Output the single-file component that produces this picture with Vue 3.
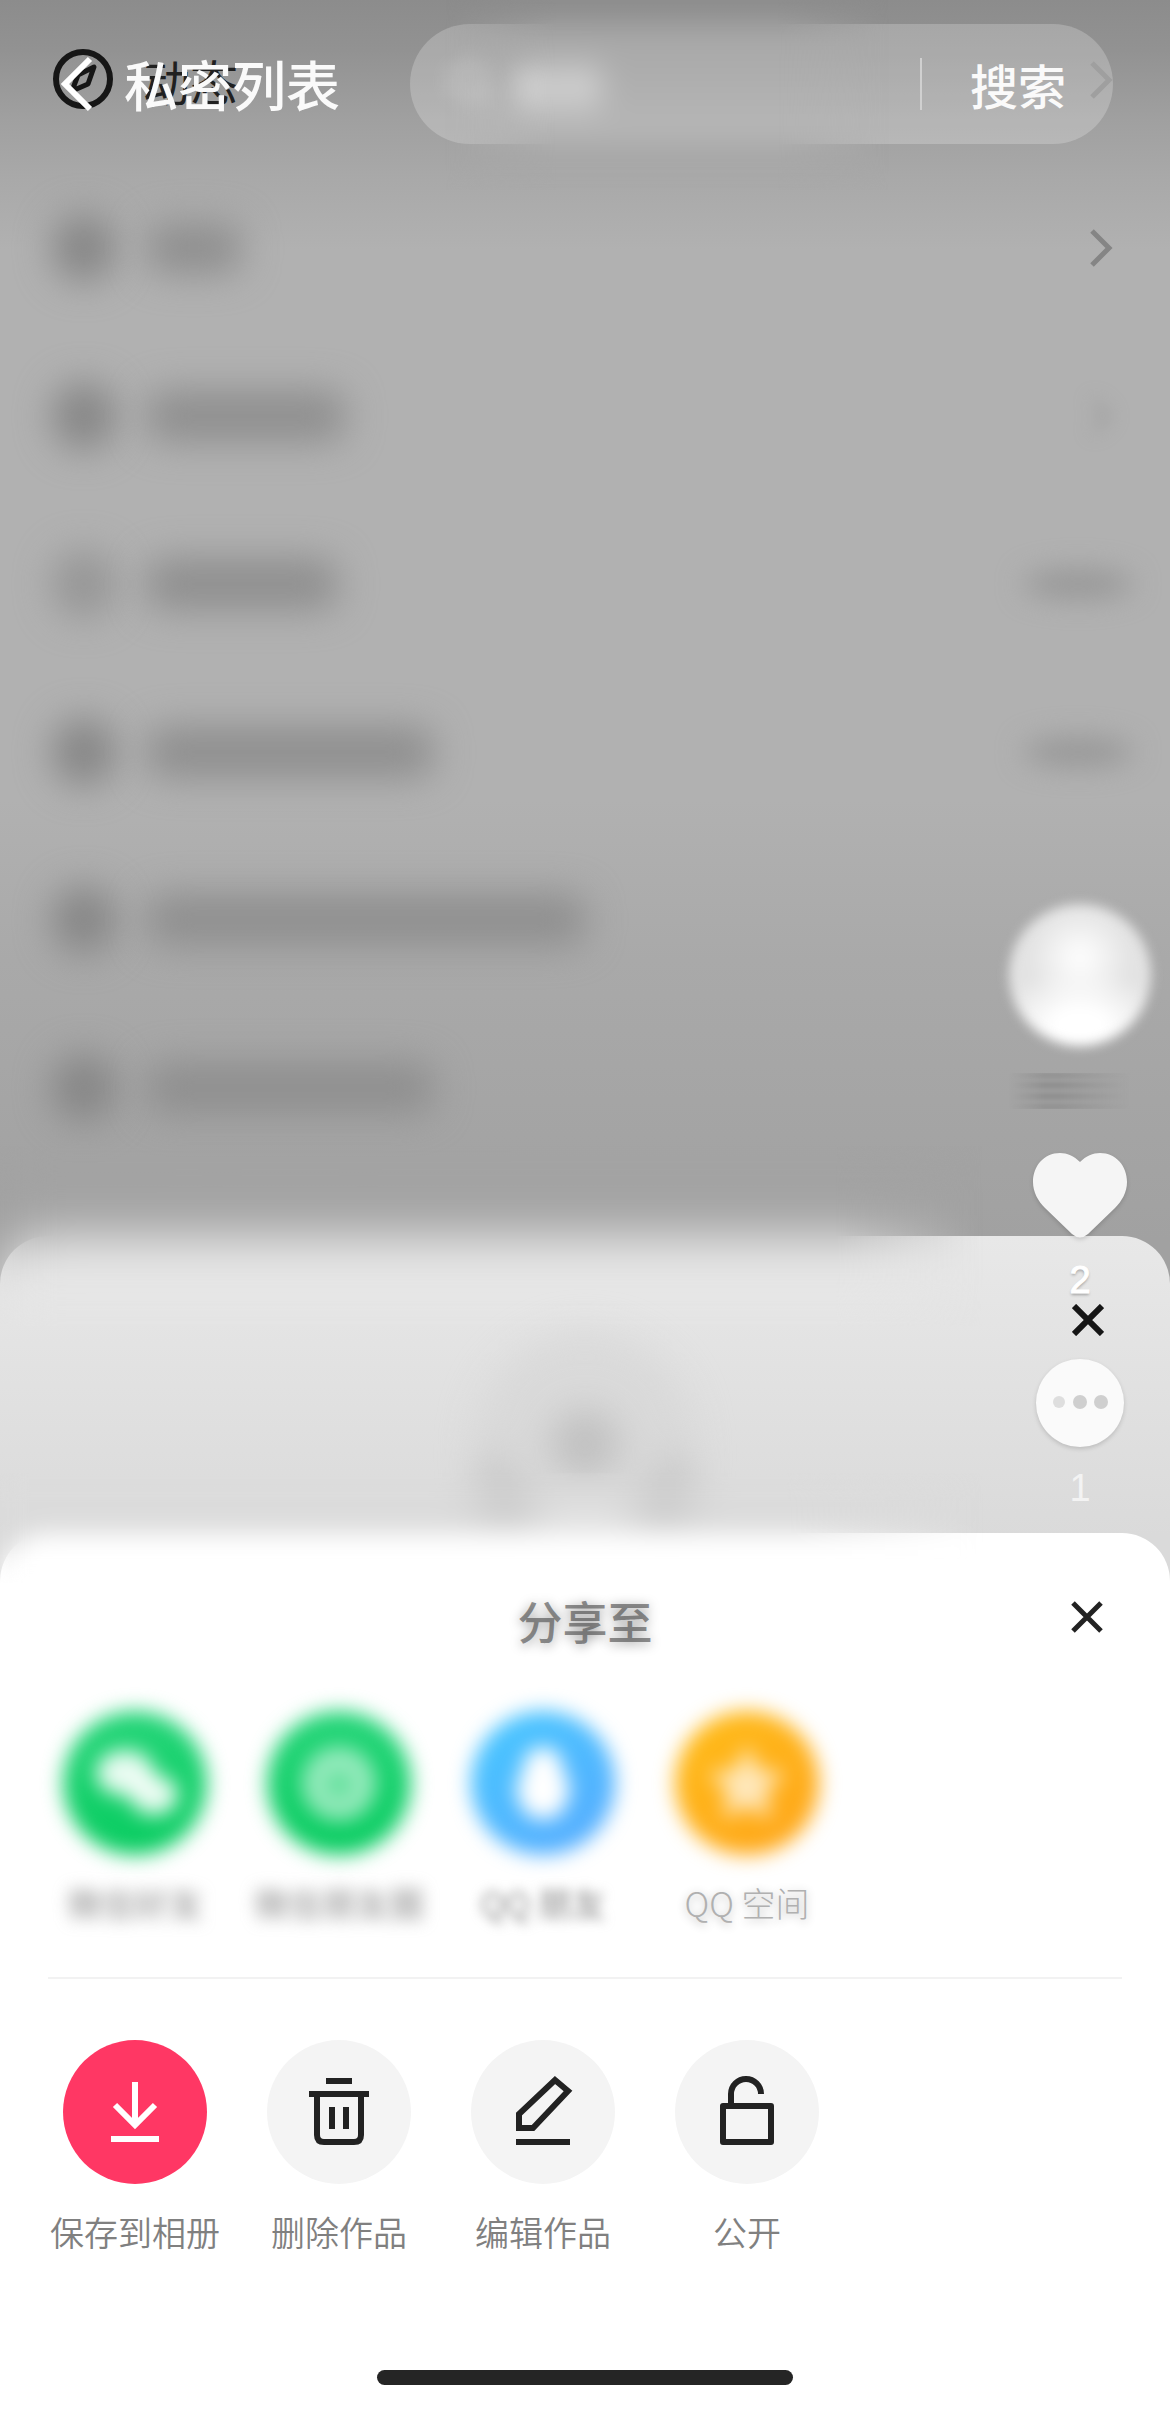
<script setup>
import { ref } from 'vue';

const keyword = ref('');

// width: length of the blurred label, tail: length of the blurred value on the right
const rows = [
    { id: 1, label: '动态', arrow: true },
    { id: 2, width: 96, arrow: true },
    { id: 3, width: 200, arrow: true, faded: true },
    { id: 4, width: 192, tail: 110, light: true },
    { id: 5, width: 288, tail: 110 },
    { id: 6, width: 440 },
    { id: 7, width: 288 }
];

const targets = [
    { id: 'wechat', label: '微信好友' },
    { id: 'moments', label: '微信朋友圈' },
    { id: 'qq', label: 'QQ 朋友' },
    { id: 'qzone', label: 'QQ 空间' }
];

const actions = [
    { id: 'save', label: '保存到相册' },
    { id: 'delete', label: '删除作品' },
    { id: 'edit', label: '编辑作品' },
    { id: 'public', label: '公开' }
];
</script>

<template>
    <div class="screen">
        <ul class="settings">
            <li v-for="row in rows" :key="row.id" class="row">
                <template v-if="row.label">
                    <svg class="row-icon" viewBox="0 0 62 62" fill="none" stroke="#161616">
                        <circle cx="31" cy="30" r="27" stroke-width="6" />
                        <path d="M42 18L36 35L20 42L26 26Z" stroke-width="5" stroke-linejoin="round" />
                    </svg>
                    <span class="row-label">{{ row.label }}</span>
                </template>
                <template v-else>
                    <span class="row-dot" :class="{ light: row.light }" />
                    <span class="row-smear" :style="{ width: row.width + 'px' }" />
                </template>
                <span class="spacer" />
                <svg v-if="row.arrow" class="row-arrow" :class="{ faded: row.faded }" viewBox="0 0 24 40">
                    <path d="M3 3L20 20L3 37" fill="none" stroke="#858585" stroke-width="5" />
                </svg>
                <span v-if="row.tail" class="row-tail" :style="{ width: row.tail + 'px' }" />
            </li>
        </ul>

        <header class="header">
            <button class="icon-button back" type="button" aria-label="返回">
                <svg width="34" height="56" viewBox="0 0 34 56">
                    <path d="M30 3L5 28L30 53" fill="none" stroke="#fff" stroke-width="6" />
                </svg>
            </button>
            <h1 class="title">私密列表</h1>
            <form class="search" @submit.prevent>
                <svg class="search-icon" viewBox="0 0 48 48" fill="none" stroke="#fff" stroke-width="5">
                    <circle cx="21" cy="21" r="16" />
                    <path d="M33 33L44 44" />
                </svg>
                <input v-model="keyword" class="search-input" type="text" placeholder="搜索" aria-label="搜索" />
                <span class="search-line" />
                <button class="search-button" type="submit">搜索</button>
            </form>
            <div class="haze haze-search" />
        </header>

        <section class="panel">
            <div class="haze haze-panel" />
            <svg class="ghost" viewBox="0 0 320 260">
                <circle cx="160" cy="130" r="110" fill="#d4d4d4" fill-opacity="0.55" />
                <path d="M66 150Q72 186 92 214M254 150Q248 186 228 214" fill="none" stroke="#c6c6c6" stroke-width="34" />
                <circle cx="160" cy="134" r="34" fill="#c0c0c0" />
                <path d="M120 220Q160 170 200 220Z" fill="#e4e4e4" stroke="#e4e4e4" stroke-width="24" />
            </svg>
            <button class="icon-button close" type="button" aria-label="关闭">
                <svg width="32" height="32" viewBox="0 0 32 32">
                    <path d="M2 2L30 30M30 2L2 30" stroke="#161616" stroke-width="6" />
                </svg>
            </button>
        </section>

        <aside class="rail">
            <div class="avatar" />
            <div class="name-smear" />
            <button class="icon-button like" type="button" aria-label="点赞">
                <svg width="94" height="86" viewBox="0 0 94 86">
                    <path
                        d="M47 9C53 3 60 0 67 0C83 0 94 13 94 29C94 39 89 48 82 55L55 81Q47 88 39 81L12 55C5 48 0 39 0 29C0 13 11 0 27 0C34 0 41 3 47 9Z"
                        fill="#f5f5f5"
                    />
                </svg>
            </button>
            <span class="count">2</span>
            <button class="icon-button comment" type="button" aria-label="评论">
                <svg width="88" height="88" viewBox="0 0 88 88">
                    <circle cx="44" cy="44" r="44" fill="#fafafa" />
                    <circle cx="23" cy="43" r="6" fill="#dedede" />
                    <circle cx="44" cy="43" r="7" fill="#cfcfcf" />
                    <circle cx="65" cy="43" r="7" fill="#cfcfcf" />
                </svg>
            </button>
            <span class="count faint">1</span>
        </aside>

        <section class="sheet">
            <div class="haze haze-sheet" />
            <div class="sheet-header">
                <h2 class="sheet-title">分享至</h2>
                <button class="icon-button sheet-close" type="button" aria-label="关闭">
                    <svg width="32" height="32" viewBox="0 0 32 32">
                        <path d="M2 2L30 30M30 2L2 30" stroke="#222" stroke-width="5" />
                    </svg>
                </button>
            </div>

            <div class="options">
                <button v-for="item in targets" :key="item.id" class="option" type="button">
                    <span class="circle soft" :class="item.id">
                        <svg viewBox="0 0 144 144">
                            <g v-if="item.id === 'wechat'" fill="#fff" fill-opacity="0.9">
                                <ellipse cx="62" cy="62" rx="29" ry="23" />
                                <ellipse cx="91" cy="84" rx="24" ry="20" />
                            </g>
                            <g v-else-if="item.id === 'moments'" fill="none" stroke="#fff" stroke-opacity="0.55">
                                <circle cx="72" cy="73" r="24" stroke-width="26" />
                                <circle cx="72" cy="73" r="5" stroke-width="5" />
                            </g>
                            <path
                                v-else-if="item.id === 'qq'"
                                d="M72 36C86 36 92 48 92 60C98 70 102 82 96 88C92 104 84 108 72 108C60 108 52 104 48 88C42 82 46 70 52 60C52 48 58 36 72 36Z"
                                fill="#fff"
                            />
                            <path
                                v-else
                                d="M72 34L84 59L111 62L91 81L96 108L72 95L48 108L53 81L33 62L60 59Z"
                                fill="#fff"
                                fill-opacity="0.7"
                            />
                        </svg>
                    </span>
                    <span class="option-label" :class="'label-' + item.id">{{ item.label }}</span>
                </button>
            </div>

            <hr class="divider" />

            <div class="options">
                <button v-for="item in actions" :key="item.id" class="option" type="button">
                    <span class="circle" :class="item.id">
                        <svg viewBox="0 0 144 144" fill="none" stroke="currentColor" stroke-width="6">
                            <path v-if="item.id === 'save'" d="M72 42V84M52 65L72 85L92 65M48 99H96" />
                            <path
                                v-else-if="item.id === 'delete'"
                                d="M59 41H85M42 54H102M50 54V95Q50 102 57 102H87Q94 102 94 95V54M65 67V89M79 67V89"
                            />
                            <path v-else-if="item.id === 'edit'" d="M84 40L97 51L62 88H48V74ZM45 102H99" />
                            <g v-else>
                                <rect x="48" y="66" width="48" height="36" stroke-linejoin="round" />
                                <path d="M56 66V54A15 15 0 0 1 86 54" />
                            </g>
                        </svg>
                    </span>
                    <span class="option-label">{{ item.label }}</span>
                </button>
            </div>

            <div class="home-bar" />
        </section>
    </div>
</template>

<style>
body {
    margin: 0;
    background: #fff;
}
</style>

<style scoped>
.screen {
    position: relative;
    overflow: hidden;
    font-family: "Noto Sans CJK SC", sans-serif;
    background: linear-gradient(
        #8c8c8c 0,
        #929292 50px,
        #a0a0a0 120px,
        #a9a9a9 180px,
        #b1b1b1 250px,
        #b1b1b1 800px,
        #a9a9a9 960px,
        #a1a1a1 1240px
    );
}

button {
    margin: 0;
    padding: 0;
    border: 0;
    background: none;
    font-family: inherit;
    cursor: pointer;
}

.icon-button {
    display: flex;
    flex: none;
}

/* Settings list behind the overlay */
.settings {
    display: flex;
    flex-direction: column;
    gap: 108px;
    margin: 0;
    padding: 50px 57px 118px 52px;
    list-style: none;
}

.row {
    display: flex;
    align-items: center;
    height: 60px;
}

.row-icon {
    width: 62px;
    height: 62px;
    margin-right: 28px;
}

.row-label {
    font-size: 48px;
    line-height: 60px;
    color: #202020;
}

.row-dot {
    width: 64px;
    height: 68px;
    margin-right: 30px;
    border-radius: 50%;
    background: #868686;
    filter: blur(18px);
}

.row-dot.light {
    background: #969696;
}

.row-smear {
    height: 52px;
    border-radius: 20px;
    background: #8f8f8f;
    filter: blur(18px);
}

.spacer {
    flex: 1;
}

.row-arrow {
    width: 24px;
    height: 40px;
}

.row-arrow.faded {
    opacity: 0.6;
    filter: blur(10px);
}

.row-tail {
    height: 28px;
    margin-right: -20px;
    border-radius: 50%;
    background: #969696;
    filter: blur(14px);
}

/* Header */
.header {
    position: absolute;
    top: 0;
    left: 0;
    right: 0;
    display: flex;
    align-items: center;
    padding: 24px 57px 0 60px;
}

.back {
    width: 34px;
    margin-right: 30px;
}

.title {
    margin: 0 70px 0 0;
    font-size: 54px;
    line-height: 72px;
    font-weight: 500;
    color: #fafafa;
    white-space: nowrap;
}

.search {
    display: flex;
    flex: 1;
    align-items: center;
    min-width: 0;
    height: 120px;
    padding: 0 47px 0 38px;
    box-sizing: border-box;
    border-radius: 60px;
    background: rgba(255, 255, 255, 0.22);
}

.search-icon {
    flex: none;
    width: 48px;
    height: 48px;
    margin-right: 16px;
    opacity: 0.5;
    filter: blur(10px);
}

.search-input {
    flex: 1;
    width: 0;
    min-width: 0;
    height: 72px;
    padding: 0;
    border: 0;
    outline: 0;
    background: none;
    font-family: inherit;
    font-size: 46px;
    color: #fff;
    filter: blur(10px);
}

.search-input::placeholder {
    color: #fff;
    opacity: 1;
}

.search-line {
    width: 2px;
    height: 52px;
    margin-right: 48px;
    background: #d0d0d0;
}

.search-button {
    font-size: 48px;
    line-height: 72px;
    font-weight: 500;
    color: #fafafa;
    white-space: nowrap;
}

/* Soft patches over hard edges */
.haze {
    position: absolute;
    pointer-events: none;
}

.haze-search {
    top: 0;
    left: 38%;
    width: 38%;
    height: 190px;
    backdrop-filter: blur(14px);
    mask-image: linear-gradient(90deg, transparent, #000 25%, #000 75%, transparent);
}

.haze-panel {
    top: -90px;
    left: 0;
    width: 84%;
    height: 180px;
    backdrop-filter: blur(24px);
    mask-image: linear-gradient(90deg, #000 85%, transparent);
}

.haze-sheet {
    top: -60px;
    left: 0;
    width: 84%;
    height: 110px;
    backdrop-filter: blur(12px);
    mask-image: linear-gradient(90deg, #000 80%, transparent);
}

/* Panel under the share sheet */
.panel {
    position: relative;
    display: flex;
    justify-content: center;
    padding: 74px 0 83px;
    border-radius: 48px 48px 0 0;
    background: linear-gradient(#e8e8e8, #dadada 300px);
}

.ghost {
    width: 320px;
    height: 260px;
    filter: blur(18px);
}

.close {
    position: absolute;
    top: 68px;
    right: 66px;
}

/* Right side rail */
.rail {
    position: absolute;
    top: 904px;
    right: 19px;
    display: flex;
    flex-direction: column;
    align-items: center;
    width: 142px;
}

.avatar {
    width: 142px;
    height: 142px;
    border-radius: 50%;
    background:
        radial-gradient(ellipse 60% 40% at 50% 86%, #fff 30%, transparent 100%),
        radial-gradient(circle at 50% 38%, #fafafa 8%, #e3e3e3 45%);
    filter: blur(6px);
}

.name-smear {
    width: 142px;
    height: 36px;
    margin: 27px 0 44px;
    background: repeating-linear-gradient(#8c8c8c 0, #8c8c8c 2px, #a0a0a0 6px, #a0a0a0 8px, #8c8c8c 11px);
    mask-image: linear-gradient(90deg, transparent, #000 25%, #000 35%, transparent 85%);
    filter: blur(2px);
}

.like,
.comment {
    filter: drop-shadow(0 2px 2px rgba(0, 0, 0, 0.15));
}

.count {
    margin: 19px 0 57px;
    font-family: "Liberation Sans", Arial, sans-serif;
    font-size: 38px;
    line-height: 44px;
    color: #fff;
    -webkit-text-stroke: 1px #fff;
    text-shadow: 0 2px 3px rgba(0, 0, 0, 0.3);
}

.count.faint {
    margin-bottom: 0;
    color: #f3f3f3;
    -webkit-text-stroke: 0;
    text-shadow: none;
}

/* Share sheet */
.sheet {
    position: relative;
    margin-top: -120px;
    padding: 57px 0 24px;
    border-radius: 48px 48px 0 0;
    background: #fff;
}

.sheet-header {
    display: grid;
    grid-template-columns: 1fr auto 1fr;
    align-items: start;
    height: 60px;
    padding: 0 67px;
}

.sheet-title {
    grid-column: 2;
    margin: 0;
    font-size: 45px;
    line-height: 62px;
    font-weight: 500;
    color: rgba(70, 70, 70, 0.6);
    text-shadow: 0 2px 12px rgba(0, 0, 0, 0.4);
}

.sheet-close {
    align-items: center;
    justify-self: end;
    height: 54px;
}

.options {
    display: flex;
    padding: 61px 33px 0;
}

.option {
    display: flex;
    flex-direction: column;
    align-items: center;
    gap: 28px;
    width: 204px;
}

.circle {
    width: 144px;
    height: 144px;
    border-radius: 50%;
    background: #f4f4f4;
    color: #222;
}

.circle svg {
    display: block;
    width: 100%;
    height: 100%;
}

.circle.soft {
    filter: blur(10px);
}

.wechat,
.moments {
    background: linear-gradient(#24d578, #08cc60);
}

.qq {
    background: linear-gradient(145deg, #45c8ff, #58aaff);
}

.qzone {
    background: linear-gradient(145deg, #ffbd18, #ffa41a);
}

.save {
    background: #ff3764;
    color: #fff;
}

.option-label {
    font-size: 34px;
    line-height: 40px;
    font-weight: 350;
    color: #808080;
    white-space: nowrap;
}

.label-wechat,
.label-moments {
    filter: blur(8px);
}

.label-qq {
    filter: blur(6px);
}

.label-qzone {
    font-weight: 300;
    color: #b0b0b0;
    text-shadow: 0 2px 10px rgba(0, 0, 0, 0.3);
}

.divider {
    height: 2px;
    margin: 54px 48px 0;
    border: 0;
    background: #f2f2f2;
}

.home-bar {
    width: 416px;
    max-width: 80%;
    height: 15px;
    margin: 118px auto 0;
    border-radius: 8px;
    background: #252525;
}
</style>
